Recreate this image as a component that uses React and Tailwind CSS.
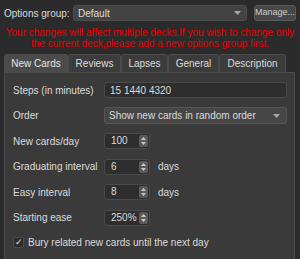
import React from 'react';

const Arrow = () => (
  <svg width="7" height="4" viewBox="0 0 7 4" className="shrink-0">
    <path d="M0 0h7L3.5 4z" fill="#a8a8a8" />
  </svg>
);

const SpinBox = ({ value }) => (
  <div className="flex h-[16px] w-[46px] items-stretch rounded-[3px] border border-[#4a4a4a] bg-[#2e2e2e]">
    <span className="flex-1 pl-[6px] leading-[14px]">{value}</span>
    <div className="my-[1px] mr-[1px] flex w-[9px] flex-col items-center justify-center gap-[2px] rounded-[2px] bg-[#5a5a5a]">
      <svg width="5" height="3" viewBox="0 0 5 3">
        <path d="M0 3h5L2.5 0z" fill="#c8c8c8" />
      </svg>
      <svg width="5" height="3" viewBox="0 0 5 3">
        <path d="M0 0h5L2.5 3z" fill="#c8c8c8" />
      </svg>
    </div>
  </div>
);

const Row = ({ label, children }) => (
  <div className="flex h-[16px] items-center">
    <span className="w-[91px] shrink-0">{label}</span>
    {children}
  </div>
);

const tabs = [
  { name: 'New Cards', w: 'w-[64px]', active: true },
  { name: 'Reviews', w: 'w-[53px]' },
  { name: 'Lapses', w: 'w-[47px]' },
  { name: 'General', w: 'w-[51px]' },
  { name: 'Description', w: 'w-[67px]' },
];

export default function App() {
  return (
    <div className="h-[259px] w-[300px] overflow-hidden bg-[#2b2b2b] text-[10px] text-[#dcdcdc] font-['Liberation_Sans',Arial,sans-serif]">
      {/* Options group */}
      <div className="flex items-center pl-[4px] pt-[5px]">
        <span className="w-[69px] shrink-0">Options group:</span>
        <div className="flex h-[16px] w-[174px] items-center justify-between rounded-[3px] border border-[#4e4e4e] bg-[#434343] pl-[4px] pr-[5px]">
          <span>Default</span>
          <Arrow />
        </div>
        <div className="ml-[7px] flex h-[16px] w-[42px] items-center justify-center rounded-[3px] border border-[#5a5a5a] bg-[#474747] text-[9px] text-[#d0d0d0]">
          Manage...
        </div>
      </div>

      {/* Warning */}
      <div className="mt-[6px] text-center leading-[11px] text-[#e80000]">
        <p>Your changes will affect multiple decks.If you wish to change only</p>
        <p>the current deck,please add a new options group first.</p>
      </div>

      {/* Tabs */}
      <div className="ml-[4px] mt-[5px] flex h-[18px]">
        {tabs.map((t) => (
          <div
            key={t.name}
            className={`flex ${t.w} items-center justify-center rounded-t-[3px] border border-b-0 border-[#4c4c4c] ${
              t.active ? 'bg-[#4b4b4b] text-[#e6e6e6]' : 'bg-[#3c3c3c]'
            }`}
          >
            {t.name}
          </div>
        ))}
      </div>

      {/* Panel */}
      <div className="ml-[4px] h-[200px] w-[291px] border border-[#4c4c4c] bg-[#3a3a3a] pl-[8px] pr-[7px] pt-[9px]">
        <div className="flex flex-col gap-[9.6px]">
          <Row label="Steps (in minutes)">
            <div className="flex h-[16px] flex-1 items-center rounded-[3px] border border-[#4a4a4a] bg-[#2e2e2e] pl-[5px]">
              15 1440 4320
            </div>
          </Row>
          <Row label="Order">
            <div className="flex h-[17px] flex-1 items-center justify-between rounded-[3px] border border-[#555555] bg-[#464646] pl-[4px] pr-[6px]">
              <span>Show new cards in random order</span>
              <Arrow />
            </div>
          </Row>
          <Row label="New cards/day">
            <SpinBox value="100" />
          </Row>
          <Row label="Graduating interval">
            <SpinBox value="6" />
            <span className="ml-[8px]">days</span>
          </Row>
          <Row label="Easy interval">
            <SpinBox value="8" />
            <span className="ml-[8px]">days</span>
          </Row>
          <Row label="Starting ease">
            <SpinBox value="250%" />
          </Row>
        </div>
        <div className="mt-[9px] flex h-[16px] items-center">
          <div className="flex h-[11px] w-[11px] items-center justify-center rounded-[2px] border border-[#4a4a4a] bg-[#2e2e2e] text-[9px] leading-none text-[#e0e0e0]">
            ✓
          </div>
          <span className="ml-[4px]">Bury related new cards until the next day</span>
        </div>
      </div>
    </div>
  );
}
